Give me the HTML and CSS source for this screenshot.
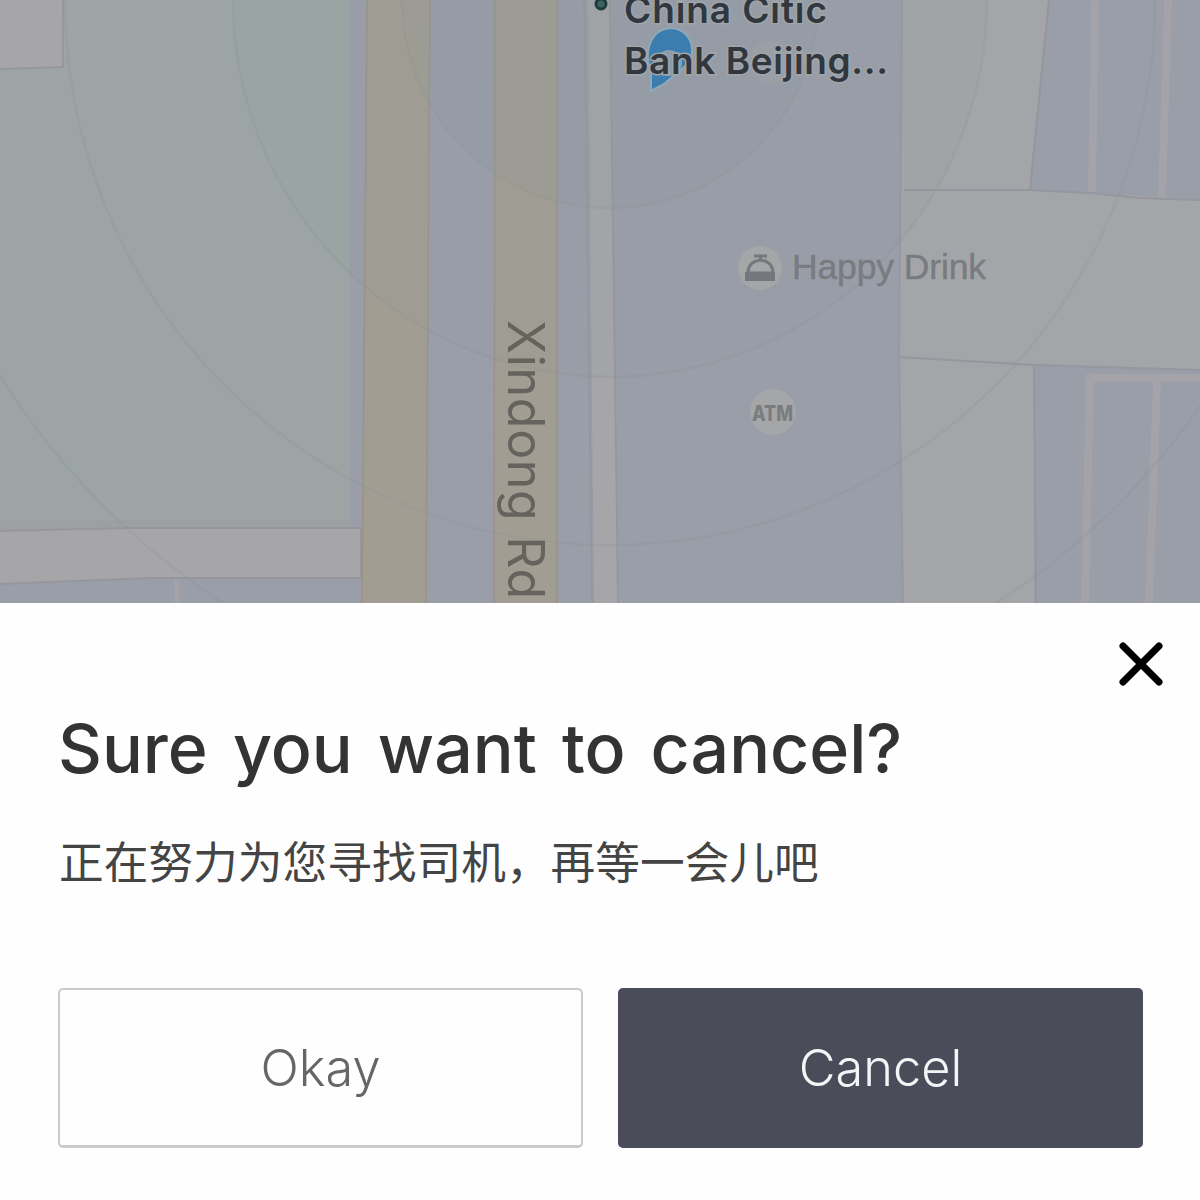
FILE: index.html
```
<!DOCTYPE html>
<html lang="zh">
<head>
    <meta charset="UTF-8">
    <title>Cancel</title>
    <link rel="stylesheet" href="styles.css">
</head>
<body>
    <div class="page">
        <svg class="map" viewBox="0 0 1200 603">
            <rect class="ground" width="1200" height="603"/>
            <!-- park -->
            <path class="park" d="M0 0H350V520H180L0 524Z"/>
            <path class="verge" d="M0 520H352V527H180L0 531Z"/>
            <path class="light line" d="M-2 -2H63V67L-2 69Z"/>
            <path class="light line" d="M-2 531L130 528H361V578H150L-2 584Z"/>
            <path class="lane" d="M177 580V603"/>
            <!-- roads -->
            <path class="road" d="M367 -2H430L426 604H362Z"/>
            <path class="road" d="M495 -2H557V604H494Z"/>
            <path class="path line" d="M584 -2H610L618 604H592Z"/>
            <path class="path light" d="M588 -2H609L617 604H594Z"/>
            <!-- right side -->
            <path class="pale" d="M903 0H1049L1030 190L1200 199V371L1034 365V603H903L898 357Z"/>
            <path class="edge" d="M904 190H1030L1090 193L1140 198L1200 200"/>
            <path class="edge" d="M1049 0L1030 190M898 357L1034 365L1200 370M1034 365L1036 603"/>
            <path class="edge soft" d="M902 0L899 357L903 603"/>
            <path class="lane wide" d="M1095 0L1092 192M1168 0L1162 197M1085 603L1090 378H1200M1157 382L1149 603"/>
            <!-- search radius -->
            <g class="rings">
                <circle class="glow" cx="610" cy="0" r="377"/>
                <circle class="glow" cx="610" cy="0" r="208"/>
                <circle cx="610" cy="0" r="208"/>
                <circle cx="610" cy="0" r="377"/>
                <circle cx="610" cy="0" r="545"/>
                <circle cx="610" cy="0" r="716"/>
            </g>
            <!-- pin -->
            <circle class="poi" cx="771" cy="62" r="22" opacity=".3"/>
            <path class="pin" d="M651 91V69C644 60 647 29 671 28C694 29 698 58 684 67L664 84Z"/>
            <circle class="hole" cx="669" cy="63" r="13"/>
            <circle class="dot" cx="601" cy="4" r="5"/>
            <text class="bank" x="624" y="23" textLength="203">China Citic</text>
            <text class="bank" x="624" y="74" textLength="264">Bank Beijing...</text>
            <!-- places -->
            <circle class="poi" cx="760" cy="268" r="22"/>
            <g class="bell">
                <path d="M754 256H767M760.500 256V260M748 273C748 256 773 256 773 273Z"/>
                <path class="base" d="M745 272H775V281H745Z"/>
            </g>
            <text class="place" x="792" y="279" textLength="194">Happy Drink</text>
            <circle class="poi" cx="773" cy="412" r="23"/>
            <text class="atm" x="752" y="421" textLength="41" lengthAdjust="spacingAndGlyphs">ATM</text>
            <text class="street" transform="translate(508 320) rotate(90)" textLength="279">Xindong Rd</text>
        </svg>
        <div class="sheet">
            <svg class="close" viewBox="0 0 44 44">
                <path d="M4 4L40 40M40 4L4 40"/>
            </svg>
            <h1 class="title">Sure you want to cancel?</h1>
            <p class="tip">正在努力为您寻找司机，再等一会儿吧</p>
            <div class="btns">
                <button class="btn">Okay</button>
                <button class="btn dark">Cancel</button>
            </div>
        </div>
    </div>
</body>
</html>
```
FILE: styles.css
```
body{
    margin:0;
    font-family:Inter, "Noto Sans CJK SC", sans-serif;
    background:#fff;
}
.page{
    width:1200px;
    height:1200px;
    overflow:hidden;
    display:flex;
    flex-direction:column;
}
.map{
    display:block;
    flex:none;
    width:1200px;
    height:603px;
}
.ground{
    fill:#9a9ea9;
}
.park{
    fill:#9ca5a3;
}
.verge{
    fill:#9e9fa2;
}
.light{
    fill:#a6a6a9;
}
.line{
    stroke:#96969d;
    stroke-width:2;
}
.pale{
    fill:#a4a5a8;
}
.road{
    fill:#a29d92;
    stroke:#9a9288;
    stroke-width:1.5;
}
.path.line{
    fill:#989ba5;
    stroke-width:1.5;
}
.edge{
    fill:none;
    stroke:#95969e;
    stroke-width:2;
}
.soft{
    stroke:#9698a3;
}
.lane{
    fill:none;
    stroke:#a3a3a9;
    stroke-width:5;
}
.wide{
    stroke-width:8;
}
.rings circle{
    fill:none;
    stroke:#8b9295;
    stroke-opacity:.25;
    stroke-width:2.5;
}
.rings .glow{
    fill:#8f9e9c;
    fill-opacity:.12;
    stroke:none;
}
.pin{
    fill:#3b7dae;
    stroke:#8fa9b8;
    stroke-width:2;
}
.hole{
    fill:#8c9eab;
}
.dot{
    fill:#3d6360;
    stroke:#1f3c3c;
    stroke-width:3;
}
.bank{
    font-size:37px;
    font-weight:600;
    fill:#31373f;
    stroke:#a0a5aa;
    stroke-width:3;
    paint-order:stroke;
}
.poi{
    fill:#a4a6a8;
}
.bell path{
    fill:none;
    stroke:#74777b;
    stroke-width:3;
}
.bell .base{
    fill:#74777b;
    stroke:none;
}
.place{
    font-family:"Liberation Sans", sans-serif;
    font-size:35.5px;
    fill:#797b80;
    stroke:#797b80;
    stroke-width:.4;
}
.atm{
    font-size:21px;
    font-weight:800;
    fill:#7b7c80;
}
.street{
    font-size:50px;
    fill:#66635f;
}
.sheet{
    flex:1;
    display:flex;
    flex-direction:column;
    padding:39px 57px 52px 58px;
    background:#fefefe;
}
.close{
    align-self:flex-end;
    width:44px;
    height:44px;
    margin-right:-20px;
}
.close path{
    stroke:#000;
    stroke-width:7;
    stroke-linecap:round;
}
.title{
    margin:20px 0 0;
    font-size:68px;
    line-height:84px;
    font-weight:500;
    word-spacing:7px;
    white-space:nowrap;
    color:#333;
}
.tip{
    margin:41px 0 0 1px;
    font-size:44.7px;
    line-height:64px;
    white-space:nowrap;
    color:#444;
}
.btns{
    display:flex;
    justify-content:space-between;
    margin-top:auto;
}
.btn{
    box-sizing:border-box;
    width:525px;
    height:160px;
    padding:0;
    border:2px solid #cbcbcb;
    border-bottom-width:3px;
    border-radius:5px;
    background:#fefefe;
    font-family:inherit;
    font-size:50.5px;
    font-weight:350;
    line-height:60px;
    color:#666;
}
.dark{
    border:0;
    background:#4a4c5a;
    color:#f5f5f7;
}
```
